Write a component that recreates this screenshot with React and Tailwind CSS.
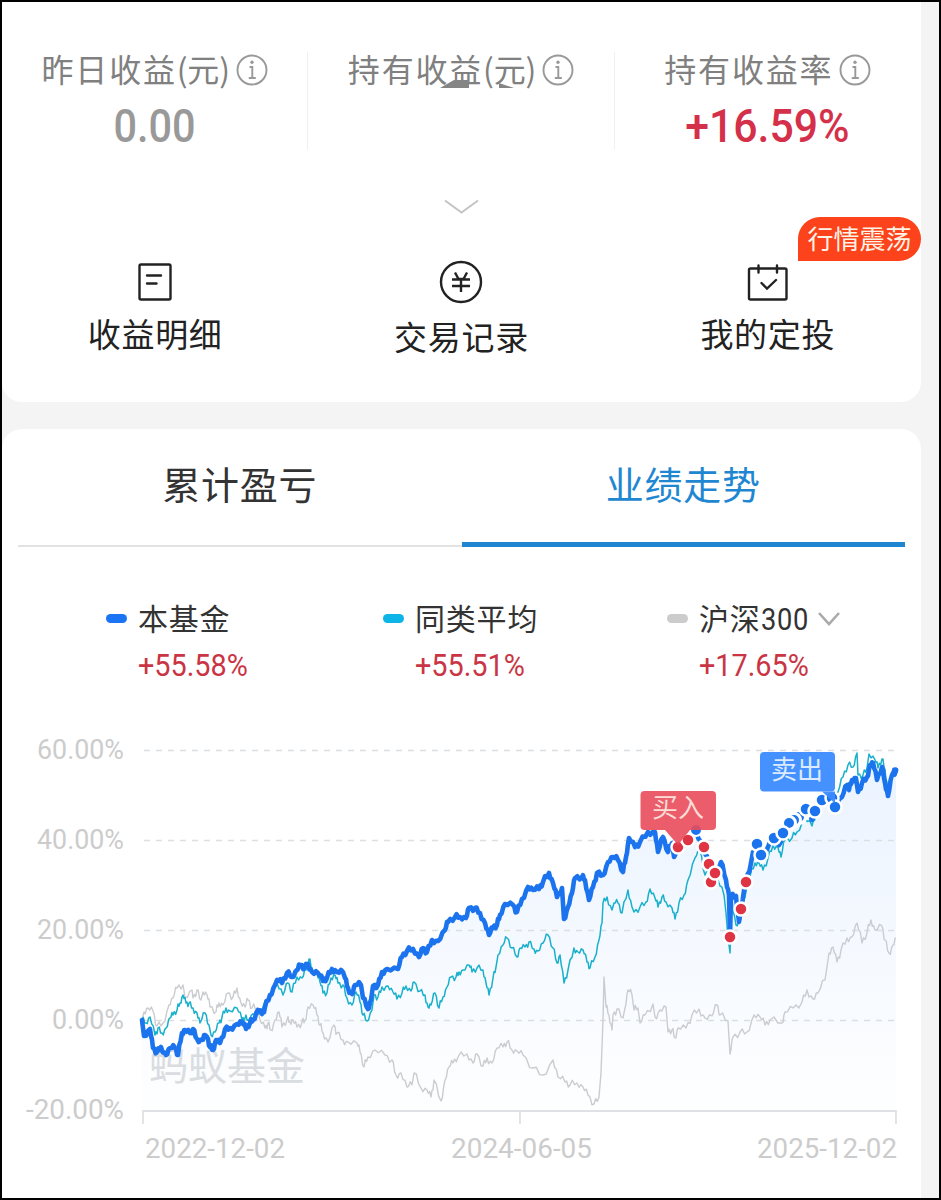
import React from 'react';

const FUND =
  '142,1020 144,1036 150,1029 153,1048 157,1052 161,1047 166,1055 170,1048 175,1048 178,1055 182,1033 185,1030 190,1033 193,1029 197,1039 202,1040 205,1035 207,1037 210,1047 213,1050 216,1040 220,1043 225,1029 230,1028 237,1024 242,1022 246,1029 250,1023 253,1020 258,1010 262,1014 265,1007 270,995 275,985 277,980 282,983 287,973 292,977 297,970 300,965 305,967 308,964 312,972 318,973 323,981 327,978 332,969 337,972 343,972 345,978 348,988 352,994 355,985 361,985 363,998 368,1009 371,1000 373,986 378,985 382,972 387,969 398,969 402,957 407,951 413,949 419,957 423,948 427,952 432,940 438,941 445,930 448,922 455,917 460,917 466,918 469,908 475,908 480,913 485,923 489,935 493,928 497,925 500,915 505,904 513,905 517,912 522,899 528,887 533,890 539,889 543,882 549,873 553,883 557,897 562,888 564,919 568,907 572,893 575,878 582,877 585,880 589,900 593,887 597,873 603,875 608,862 613,857 618,860 623,872 626,857 629,838 635,847 640,842 648,832 655,832 658,852 663,837 668,852 672,843 674,857 678,848 688,840 696,830 703,847 709,863 715,873 721,862 726,880 729,895 730,937 731,896 736,896 739,922 741,909 746,882 751,863 753,852 757,844 761,855 768,847 774,838 779,845 784,833 790,825 800,815 806,809 812,820 815,811 822,800 832,798 835,806 842,797 847,785 849,790 852,780 856,778 858,792 862,783 867,777 870,765 873,763 877,780 882,767 885,783 888,796 892,775 896,770';

const AVERAGE =
  '142,1020 146,1023 150,1017 155,1035 158,1028 162,1033 166,1028 170,1018 173,1015 177,1010 180,1003 183,995 186,1003 189,1003 193,1008 197,1013 200,1023 205,1013 209,1025 211,1035 215,1032 219,1023 222,1017 226,1008 230,1011 237,1008 242,1020 245,1018 248,1020 253,1014 258,1012 263,1007 270,995 277,983 283,995 288,983 292,992 297,977 302,978 306,970 309,959 312,968 317,973 320,982 323,993 327,993 331,978 335,975 338,983 343,985 347,998 352,1005 356,992 360,1002 363,1015 367,1021 372,1010 374,995 378,997 382,987 388,986 393,992 397,999 402,993 406,986 411,991 414,982 420,991 425,995 428,1007 431,1005 435,993 439,1008 443,997 447,987 451,977 456,977 459,972 463,970 469,965 472,972 477,968 483,970 486,983 489,995 493,978 496,967 498,955 503,945 507,938 512,948 517,957 520,948 525,947 529,942 534,949 538,951 543,943 548,935 553,948 557,963 560,955 564,983 568,970 574,948 578,952 583,950 587,962 590,968 595,957 599,940 602,923 603,903 607,897 612,910 614,903 618,903 622,913 628,890 632,907 634,912 640,907 646,902 650,889 655,898 658,907 662,897 666,902 672,908 675,919 679,903 684,895 688,880 695,858 700,850 705,875 712,870 718,880 724,895 730,953 732,900 736,925 740,922 745,897 750,877 755,863 759,863 763,870 768,858 773,845 778,847 781,857 785,840 792,838 797,832 805,818 812,826 816,812 824,800 832,805 838,792 843,777 848,765 853,767 857,753 858,775 863,775 867,768 869,754 875,760 878,768 882,759 885,770 888,790 893,773 896,770';

const INDEX_300 =
  '142,1020 144,1012 148,1008 153,1011 157,1026 163,1023 169,1005 173,998 177,988 183,985 185,997 192,990 193,998 197,990 201,1000 203,992 207,995 210,1007 216,1012 219,1003 223,1005 228,993 233,997 237,988 241,1003 245,1007 248,1000 252,1008 257,1008 260,1020 265,1028 268,1023 271,1030 275,1020 279,1012 282,1027 287,1020 290,1022 293,1020 297,1027 302,1022 305,1020 308,1007 313,1005 317,1015 320,1025 323,1033 328,1042 334,1025 337,1033 343,1040 348,1042 357,1043 360,1052 364,1067 368,1057 375,1050 385,1055 392,1060 396,1075 401,1073 407,1087 412,1085 414,1073 421,1088 427,1090 431,1097 434,1080 441,1101 445,1080 449,1067 453,1063 458,1057 467,1054 473,1063 477,1054 483,1066 487,1058 492,1063 497,1048 503,1047 507,1042 512,1050 517,1051 523,1055 533,1068 543,1075 553,1060 558,1077 565,1082 570,1085 577,1083 583,1087 588,1095 594,1104 599,1097 601,1073 603,1020 604,977 606,1007 609,1015 612,1030 613,1015 617,1009 623,1018 625,1008 628,990 632,995 634,1010 638,1008 640,1023 645,1015 653,1004 655,1017 660,1010 666,1007 668,1032 672,1030 675,1038 678,1028 686,1028 692,1015 699,1009 705,1018 712,1016 717,1005 720,1015 728,1021 730,1054 733,1037 740,1032 747,1032 754,1015 760,1017 765,1025 770,1020 782,1023 785,1012 793,1008 802,1002 807,990 813,999 818,993 825,980 827,967 829,953 833,947 837,962 841,950 847,938 852,937 857,923 862,943 867,933 871,920 875,930 882,926 885,940 889,953 893,945 896,938';

// Adds a small wobble between the known points so the lines look like daily data
const roughen = (points, size) => {
  const list = points.split(' ').map((p) => p.split(',').map(Number));
  const out = [];
  list.forEach(([x, y], i) => {
    out.push(`${x},${y}`);
    const next = list[i + 1];
    if (next && next[0] - x > 2) {
      [0.33, 0.66].forEach((t, k) => {
        const wobble = (((i * 7 + k * 5) % 9) / 4 - 1) * size;
        out.push(`${(x + (next[0] - x) * t).toFixed(1)},${(y + (next[1] - y) * t + wobble).toFixed(1)}`);
      });
    }
  });
  return out.join(' ');
};

const fundLine = roughen(FUND, 2.8);
const averageLine = roughen(AVERAGE, 3.6);
const indexLine = roughen(INDEX_300, 4);

const buys = [[678, 847], [688, 840], [704, 847], [711, 882], [709, 864], [715, 873], [730, 937], [741, 909], [746, 882]];
const sells = [[757, 844], [761, 855], [774, 838], [783, 833], [806, 809], [815, 811], [822, 800], [832, 798], [835, 807]];

const yAxis = [
  { label: '60.00%', y: 750, x: 37, width: 87 },
  { label: '40.00%', y: 840, x: 37, width: 87 },
  { label: '20.00%', y: 930, x: 37, width: 87 },
  { label: '0.00%', y: 1020, x: 52, width: 72 },
  { label: '-20.00%', y: 1110, x: 26, width: 98 }
];

const InfoIcon = () => (
  <svg className="ml-1.5 shrink-0" width="32" height="32" viewBox="0 0 32 32" fill="none" stroke="#999" strokeWidth="1.9">
    <circle cx="16" cy="16" r="14.5" />
    <path d="M13.500 13h2.800v10.500M12.800 24h7" />
    <circle cx="16" cy="8.3" r="1.7" fill="#999" stroke="none" />
  </svg>
);

const StatTitle = ({ children, unit }) => (
  <div className="flex h-9 items-center justify-center whitespace-nowrap text-[32px] tracking-[1.8px] text-[#808080]">
    <span className="-mt-1">
      {children}
      {unit && <span className="tracking-[-0.2px]">({unit})</span>}
    </span>
    <InfoIcon />
  </div>
);

const Stat = ({ title, unit, value, valueClass }) => (
  <div className="flex flex-col items-center">
    <StatTitle unit={unit}>{title}</StatTitle>
    <div className={`mt-3.5 h-[48px] origin-center text-[46px] leading-[48px] ${valueClass}`}>{value}</div>
  </div>
);

const Legend = ({ name, value, pill, children }) => (
  <div className="flex">
    <span className={`mt-[13px] h-[9px] w-[21px] rounded-full ${pill}`} />
    <div className="ml-[11px]">
      <div className="flex h-9 items-center whitespace-nowrap text-[30px] tracking-[0.8px] text-[#333]">
        <span className="-mt-[3px]">{name}</span>
        {children}
      </div>
      <div className="mt-[11px] h-9 origin-left scale-x-[0.915] font-[Roboto] text-[31.5px] leading-9 text-[#c93545]">{value}</div>
    </div>
  </div>
);

const Chart = () => (
  <svg className="block" width="919" height="478" viewBox="2 720 919 478" fill="none">
    <defs>
      <linearGradient id="area" x1="0" y1="750" x2="0" y2="1110" gradientUnits="userSpaceOnUse">
        <stop offset="0" stopColor="#1677ff" stopOpacity="0.09" />
        <stop offset="1" stopColor="#1677ff" stopOpacity="0.005" />
      </linearGradient>
    </defs>

    <text x="149" y="1080" fontSize="39" fill="#dcdee0" textLength="156">蚂蚁基金</text>
    <polygon points={`${fundLine} 896,1110 142,1110`} fill="url(#area)" />

    {/* Grid and axis labels */}
    {yAxis.map((row) => (
      <g key={row.label}>
        {row.y < 1100 && <path d={`M144 ${row.y}.5H896`} stroke="#dcdfe2" strokeWidth="1.5" strokeDasharray="6 6" />}
        <text x={row.x} y={row.y + 8.5} fontFamily="Roboto" fontSize="28.5" fill="#ccc" textLength={row.width} lengthAdjust="spacingAndGlyphs">
          {row.label}
        </text>
      </g>
    ))}
    <path d="M143 1124v-13H896v13M520 1111v13" stroke="#dfe1e4" strokeWidth="1.8" />
    <g fontFamily="Roboto" fontSize="28.5" fill="#ccc">
      <text x="145" y="1157.5" textLength="140" lengthAdjust="spacingAndGlyphs">2022-12-02</text>
      <text x="451" y="1157.5" textLength="141" lengthAdjust="spacingAndGlyphs">2024-06-05</text>
      <text x="757" y="1157.5" textLength="140" lengthAdjust="spacingAndGlyphs">2025-12-02</text>
    </g>

    {/* Series */}
    <polyline points={indexLine} stroke="#cbcccf" strokeWidth="1.4" strokeLinejoin="round" />
    <polyline points={averageLine} stroke="#19b0cb" strokeWidth="1.5" strokeLinejoin="round" />
    <polyline points={fundLine} stroke="#1b74ee" strokeWidth="4.6" strokeLinejoin="round" strokeLinecap="round" />
    <circle cx="895" cy="770.5" r="3.2" fill="#1b74ee" />

    {/* Trades */}
    <circle cx="696" cy="830" r="6" fill="#1b74ee" stroke="#fff" strokeWidth="2" />
    {[[803, 813], [799, 817], [794, 820], [789, 823]].map(([x, y]) => (
      <circle key={x} cx={x} cy={y} r="6.5" fill="#1b74ee" stroke="#fff" strokeWidth="3" />
    ))}
    {sells.map(([x, y]) => (
      <circle key={x} cx={x} cy={y} r="6.5" fill="#1b74ee" stroke="#fff" strokeWidth="2.5" />
    ))}
    {buys.map(([x, y]) => (
      <circle key={x} cx={x} cy={y} r="6.5" fill="#df3444" stroke="#fff" strokeWidth="2.5" />
    ))}

    <g fill="#e94b5b" fillOpacity="0.9">
      <rect x="640.5" y="791" width="75.5" height="39" rx="4" />
      <path d="M665 830h25l-12 15z" />
    </g>
    <text x="652" y="817" fontSize="26" fill="#fbdcd6" textLength="52">买入</text>
    <g fill="#3b8bff" fillOpacity="0.95">
      <rect x="760" y="752" width="75" height="39.5" rx="4" />
      <path d="M822 791.500h13v12z" />
    </g>
    <text x="771" y="778.5" fontSize="26" fill="#dcebff" textLength="52">卖出</text>
  </svg>
);

const App = () => {
  return (
    <div className="h-[1200px] w-[941px] overflow-hidden border-2 border-black bg-[#f4f4f4] font-['Noto_Sans_CJK_SC',sans-serif]">
      <div className="flex w-[919px] flex-col gap-[27px]">
        {/* Summary card */}
        <section className="relative h-[400px] rounded-b-[20px] bg-white pt-[50px]">
          <div className="grid h-[94px] grid-cols-3 divide-x divide-[#f0f0f0]">
            <Stat title="昨日收益" unit="元" value="0.00" valueClass="scale-x-[0.9] font-[Roboto] font-medium text-[#999]" />
            <div className="relative">
              <StatTitle unit="元">持有收益</StatTitle>
              <svg className="absolute left-[132px] top-[27px]" width="76" height="10" viewBox="0 0 76 10" fill="#858585">
                <path d="M0 9 14 1h15v8zM59 4l15 5H59z" />
              </svg>
            </div>
            <Stat title="持有收益率" value="+16.59%" valueClass="scale-x-[0.93] font-[Roboto] font-medium text-[#d5304a]" />
          </div>

          <div className="mt-[53px] flex h-4 justify-center">
            <svg width="36" height="16" viewBox="0 0 36 16" fill="none" stroke="#c4c4c4" strokeWidth="2">
              <path d="M1 1.500 17.500 13.500 34 1.500" />
            </svg>
          </div>

          <div className="mt-[45px] grid grid-cols-3 text-[33px] leading-9 tracking-[0.7px] text-[#222]">
            <div className="flex flex-col items-center">
              <svg width="44" height="44" viewBox="0 0 44 44" fill="none" stroke="#222" strokeWidth="2.4" strokeLinecap="round">
                <rect x="6.500" y="4.500" width="31" height="35" rx="1.5" />
                <path d="M14 15.500h14M14 23.500h9.500" />
              </svg>
              <span className="mt-[11px]">收益明细</span>
            </div>
            <div className="flex flex-col items-center">
              <svg width="44" height="44" viewBox="0 0 44 44" fill="none" stroke="#222" strokeWidth="2.4">
                <circle cx="22" cy="22" r="20" />
                <path d="m16 12.500 3.500 6.500h5l3.500-6.500M13 19.500h18M13 26h18M22 19v13" />
              </svg>
              <span className="mt-3.5">交易记录</span>
            </div>
            <div className="flex flex-col items-center">
              <svg width="44" height="44" viewBox="0 0 44 44" fill="none" stroke="#222" strokeWidth="2.4" strokeLinecap="round">
                <rect x="3" y="8.500" width="37.500" height="31" rx="1.5" />
                <path d="M12.500 5.500v7M31 5.500v7M15.500 23l5.500 5.500 9-8.500" />
              </svg>
              <span className="mt-[11px]">我的定投</span>
            </div>
          </div>

          <div className="absolute right-0 top-[215px] flex h-[44px] w-[123px] items-center justify-center rounded-[22px] rounded-bl-none bg-[#fc431b] pb-1 text-[26px] text-[#fff3e6]">
            行情震荡
          </div>
        </section>

        {/* Performance card */}
        <section className="rounded-t-[20px] bg-white">
          <div className="mx-4 flex h-[118px] text-center text-[38px] tracking-[0.8px]">
            <div className="flex-1 border-b-2 border-[#e2e2e2] pt-[26px] leading-[56px] text-[#333]">累计盈亏</div>
            <div className="flex-1 border-b-[5px] border-[#1f87d2] pt-[26px] leading-[56px] text-[#1f87d2]">业绩走势</div>
          </div>

          <div className="flex h-[173px] pl-[104px] pt-[54px]">
            <div className="w-[277px]">
              <Legend name="本基金" value="+55.58%" pill="bg-[#1b74f4]" />
            </div>
            <div className="w-[284px]">
              <Legend name="同类平均" value="+55.51%" pill="bg-[#0cb4e8]" />
            </div>
            <Legend name="沪深" value="+17.65%" pill="bg-[#ccc]">
              <span className="mt-[3px] origin-left scale-x-[0.88] font-[Roboto] text-[31px]">300</span>
              <svg className="ml-0.5" width="24" height="16" viewBox="0 0 24 16" fill="none" stroke="#aaa" strokeWidth="2.6">
                <path d="m2 2 10 11L22 2" />
              </svg>
            </Legend>
          </div>

          <Chart />
        </section>
      </div>
    </div>
  );
};

export default App;
